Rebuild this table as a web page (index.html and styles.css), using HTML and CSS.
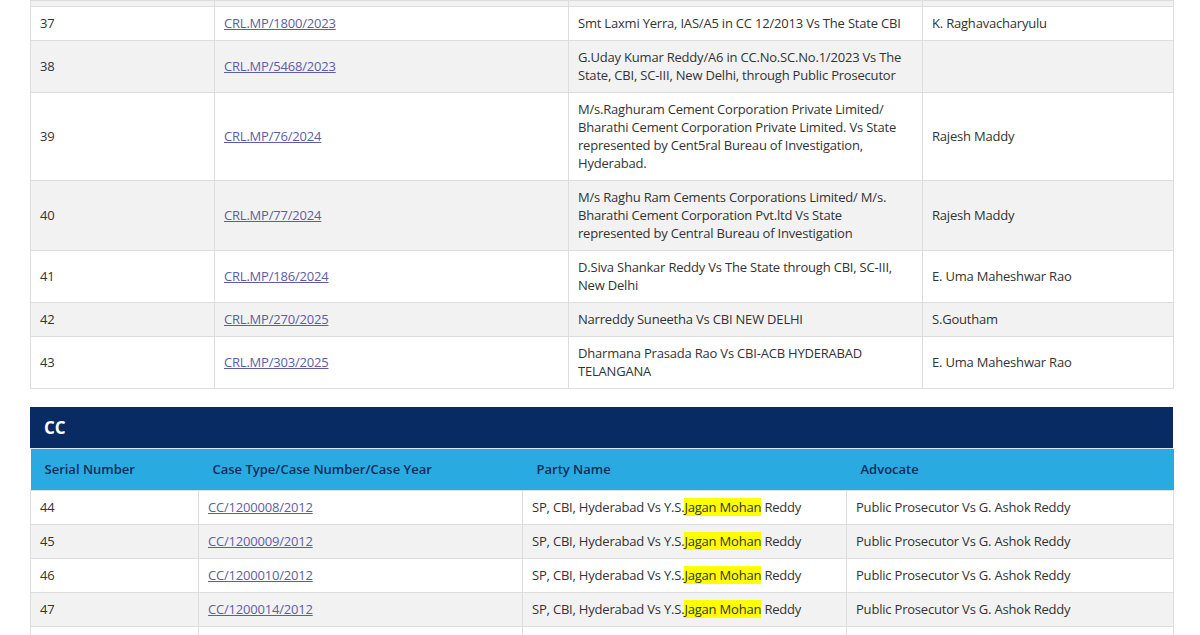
FILE: index.html
```html
<!DOCTYPE html>
<html>
<head>
<meta charset="utf-8">
<link rel="stylesheet" href="styles.css">
</head>
<body>
<div class="page">
  <table class="grid first">
    <colgroup><col class="c1"><col class="c2"><col class="c3"><col class="c4"></colgroup>
    <tbody>
      <tr class="partial alt"><td></td><td></td><td></td><td></td></tr>
      <tr><td>37</td><td><a href="#">CRL.MP/1800/2023</a></td><td>Smt Laxmi Yerra, IAS/A5 in CC 12/2013 Vs The State CBI</td><td>K. Raghavacharyulu</td></tr>
      <tr class="alt"><td>38</td><td><a href="#">CRL.MP/5468/2023</a></td><td>G.Uday Kumar Reddy/A6 in CC.No.SC.No.1/2023 Vs The State, CBI, SC-III, New Delhi, through Public Prosecutor</td><td></td></tr>
      <tr><td>39</td><td><a href="#">CRL.MP/76/2024</a></td><td>M/s.Raghuram Cement Corporation Private Limited/ Bharathi Cement Corporation Private Limited. Vs State represented by Cent5ral Bureau of Investigation, Hyderabad.</td><td>Rajesh Maddy</td></tr>
      <tr class="alt"><td>40</td><td><a href="#">CRL.MP/77/2024</a></td><td>M/s Raghu Ram Cements Corporations Limited/ M/s. Bharathi Cement Corporation Pvt.ltd Vs State represented by Central Bureau of Investigation</td><td>Rajesh Maddy</td></tr>
      <tr><td>41</td><td><a href="#">CRL.MP/186/2024</a></td><td>D.Siva Shankar Reddy Vs The State through CBI, SC-III, New Delhi</td><td>E. Uma Maheshwar Rao</td></tr>
      <tr class="alt"><td>42</td><td><a href="#">CRL.MP/270/2025</a></td><td>Narreddy Suneetha Vs CBI NEW DELHI</td><td>S.Goutham</td></tr>
      <tr><td>43</td><td><a href="#">CRL.MP/303/2025</a></td><td>Dharmana Prasada Rao Vs CBI-ACB HYDERABAD TELANGANA</td><td>E. Uma Maheshwar Rao</td></tr>
    </tbody>
  </table>

  <section class="panel">
    <h2 class="panel-title">CC</h2>
    <table class="grid second">
      <colgroup><col class="d1"><col class="d2"><col class="d3"><col class="d4"></colgroup>
      <thead>
        <tr><th>Serial Number</th><th>Case Type/Case Number/Case Year</th><th>Party Name</th><th>Advocate</th></tr>
      </thead>
      <tbody>
        <tr><td>44</td><td><a href="#">CC/1200008/2012</a></td><td>SP, CBI, Hyderabad Vs Y.S.<mark>Jagan Mohan</mark> Reddy</td><td>Public Prosecutor Vs G. Ashok Reddy</td></tr>
        <tr class="alt"><td>45</td><td><a href="#">CC/1200009/2012</a></td><td>SP, CBI, Hyderabad Vs Y.S.<mark>Jagan Mohan</mark> Reddy</td><td>Public Prosecutor Vs G. Ashok Reddy</td></tr>
        <tr><td>46</td><td><a href="#">CC/1200010/2012</a></td><td>SP, CBI, Hyderabad Vs Y.S.<mark>Jagan Mohan</mark> Reddy</td><td>Public Prosecutor Vs G. Ashok Reddy</td></tr>
        <tr class="alt"><td>47</td><td><a href="#">CC/1200014/2012</a></td><td>SP, CBI, Hyderabad Vs Y.S.<mark>Jagan Mohan</mark> Reddy</td><td>Public Prosecutor Vs G. Ashok Reddy</td></tr>
        <tr class="blank"><td></td><td></td><td></td><td></td></tr>
      </tbody>
    </table>
  </section>
</div>
</body>
</html>
```

FILE: styles.css
```css
html, body {
  margin: 0;
  padding: 0;
  background: #ffffff;
}
body {
  font-family: "Open Sans", "Liberation Sans", sans-serif;
  font-size: 13px;
  letter-spacing: -0.2px;
  line-height: 18px;
  color: #333333;
  overflow: hidden;
}
.page {
  width: 1143px;
  margin-left: 30px;
}
.grid {
  width: 1143px;
  border-collapse: collapse;
  table-layout: fixed;
}
.grid td {
  border: 1px solid #dddddd;
  padding: 7px 9px 8px;
  vertical-align: middle;
}
.grid tr.alt td {
  background: #f2f2f2;
}
.grid tr.partial td {
  height: 5px;
  padding: 0;
}
.grid tr.blank td {
  height: 18px;
}
.grid a {
  color: #5b5ea6;
  text-decoration: underline;
}
.c1 { width: 184px; }
.c2 { width: 354px; }
.c3 { width: 354px; }
.c4 { width: 251px; }

.panel {
  margin-top: 18px;
}
.panel-title {
  margin: 0;
  background: #092b63;
  color: #ffffff;
  font-size: 17px;
  letter-spacing: 0;
  font-weight: 700;
  line-height: 41px;
  height: 41px;
  padding: 0 14px;
  border-bottom: 1px solid #d6e6f2;
}
.second th {
  background: #29abe2;
  color: #0e2c5c;
  font-weight: 600;
  font-size: 13px;
  letter-spacing: 0;
  text-align: left;
  padding: 0 14px 1px;
  height: 40px;
  border: none;
}
.d1 { width: 168px; }
.d2 { width: 324px; }
.d3 { width: 324px; }
.d4 { width: 327px; }
mark {
  background: #ffff00;
  color: #333333;
}
```
